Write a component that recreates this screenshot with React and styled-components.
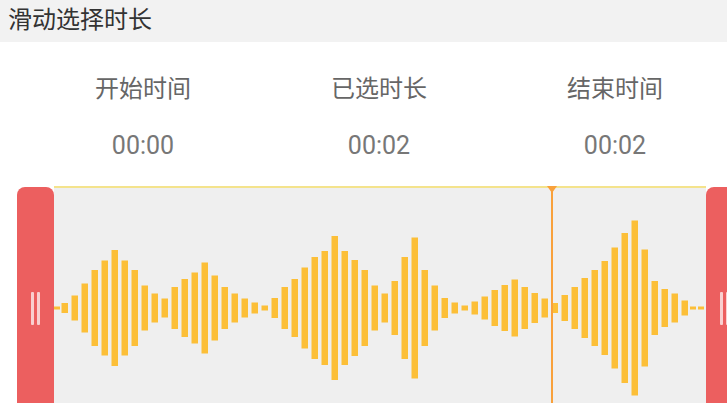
import React from 'react';
import styled, { createGlobalStyle } from 'styled-components';

const GlobalStyle = createGlobalStyle`
  html, body {
    margin: 0;
    padding: 0;
    background: #ffffff;
  }
  body {
    width: 727px;
    height: 403px;
    overflow: hidden;
    font-family: 'Roboto', 'Noto Sans CJK SC', sans-serif;
  }
`;

const Page = styled.div`
  width: 727px;
  height: 403px;
  overflow: hidden;
  display: flex;
  flex-direction: column;
`;

const Header = styled.div`
  height: 42px;
  flex: none;
  display: flex;
  align-items: center;
  padding: 0 0 8px 8px;
  box-sizing: border-box;
  background: #f2f2f2;
  color: #333333;
  font-size: 24px;
`;

const InfoRow = styled.div`
  display: grid;
  grid-template-columns: repeat(3, 236px);
  padding: 32px 0 0 25px;
  flex: none;
`;

const InfoCell = styled.div`
  display: flex;
  flex-direction: column;
  align-items: center;
  gap: 27px;
`;

const Label = styled.span`
  font-size: 24px;
  line-height: 30px;
  color: #666666;
`;

const Time = styled.span`
  font-size: 25px;
  line-height: 30px;
  color: #777777;
`;

const Timeline = styled.div`
  display: flex;
  margin: 25px 0 0 17px;
  width: 726px;
  height: 230px;
  flex: none;
`;

const Handle = styled.div`
  width: 37px;
  flex: none;
  background: #ec5f5f;
  border-radius: 8px 8px 0 0;
  margin-top: 1px;
  display: flex;
  justify-content: center;
  align-items: flex-start;
  gap: 3.5px;
  padding-top: 105px;
  box-sizing: border-box;
`;

const Grip = styled.span`
  width: 2.5px;
  height: 33px;
  border-radius: 1px;
  background: rgba(255, 255, 255, 0.7);
`;

const Track = styled.div`
  position: relative;
  flex: 1;
  background: #efefef;
  border-top: 2px solid #f4e38c;
`;

const Wave = styled.svg`
  display: block;
`;

const Playhead = styled.div`
  position: absolute;
  top: -2px;
  bottom: 0;
  left: 497px;
  width: 2px;
  background: #f9a13b;

  &::before {
    content: '';
    position: absolute;
    top: 0;
    left: -4px;
    border-left: 5px solid transparent;
    border-right: 5px solid transparent;
    border-top: 7px solid #f9a13b;
  }
`;

const BAR_COLOR = '#fcbf38';

// bar heights, one every 10px from the left edge of the track
const bars = [
  10, 25, 49, 76, 95, 116, 95, 76, 45, 29,
  19, 42, 58, 71, 91, 65, 42, 29, 19, 11,
  5, 20, 42, 58, 81, 102, 114, 144, 114, 96,
  76, 45, 29, 54, 102, 141, 76, 45, 20, 11,
  5, 13, 23, 36, 46, 57, 42, 30, 19, 10,
  26, 42, 60, 76, 94, 121, 150, 175, 117, 54,
  38, 29, 15
];

const dashes = [0, 636, 644];

const info = [
  { label: '开始时间', time: '00:00' },
  { label: '已选时长', time: '00:02' },
  { label: '结束时间', time: '00:02' }
];

const CENTER = 120;

const App = () => (
  <Page>
    <GlobalStyle />
    <Header>滑动选择时长</Header>
    <InfoRow>
      {info.map(({ label, time }) => (
        <InfoCell key={label}>
          <Label>{label}</Label>
          <Time>{time}</Time>
        </InfoCell>
      ))}
    </InfoRow>
    <Timeline>
      <Handle>
        <Grip />
        <Grip />
      </Handle>
      <Track>
        <Wave width="652" height="228" viewBox="0 0 652 228">
          {dashes.map((x) => (
            <rect key={'d' + x} x={x} y={CENTER - 1.5} width="6" height="3" fill={BAR_COLOR} />
          ))}
          {bars.map((h, i) => (
            <rect
              key={i}
              x={7.5 + i * 10}
              y={CENTER - h / 2}
              width="6.5"
              height={h}
              fill={BAR_COLOR}
            />
          ))}
        </Wave>
        <Playhead />
      </Track>
      <Handle>
        <Grip />
        <Grip />
      </Handle>
    </Timeline>
  </Page>
);

export default App;
